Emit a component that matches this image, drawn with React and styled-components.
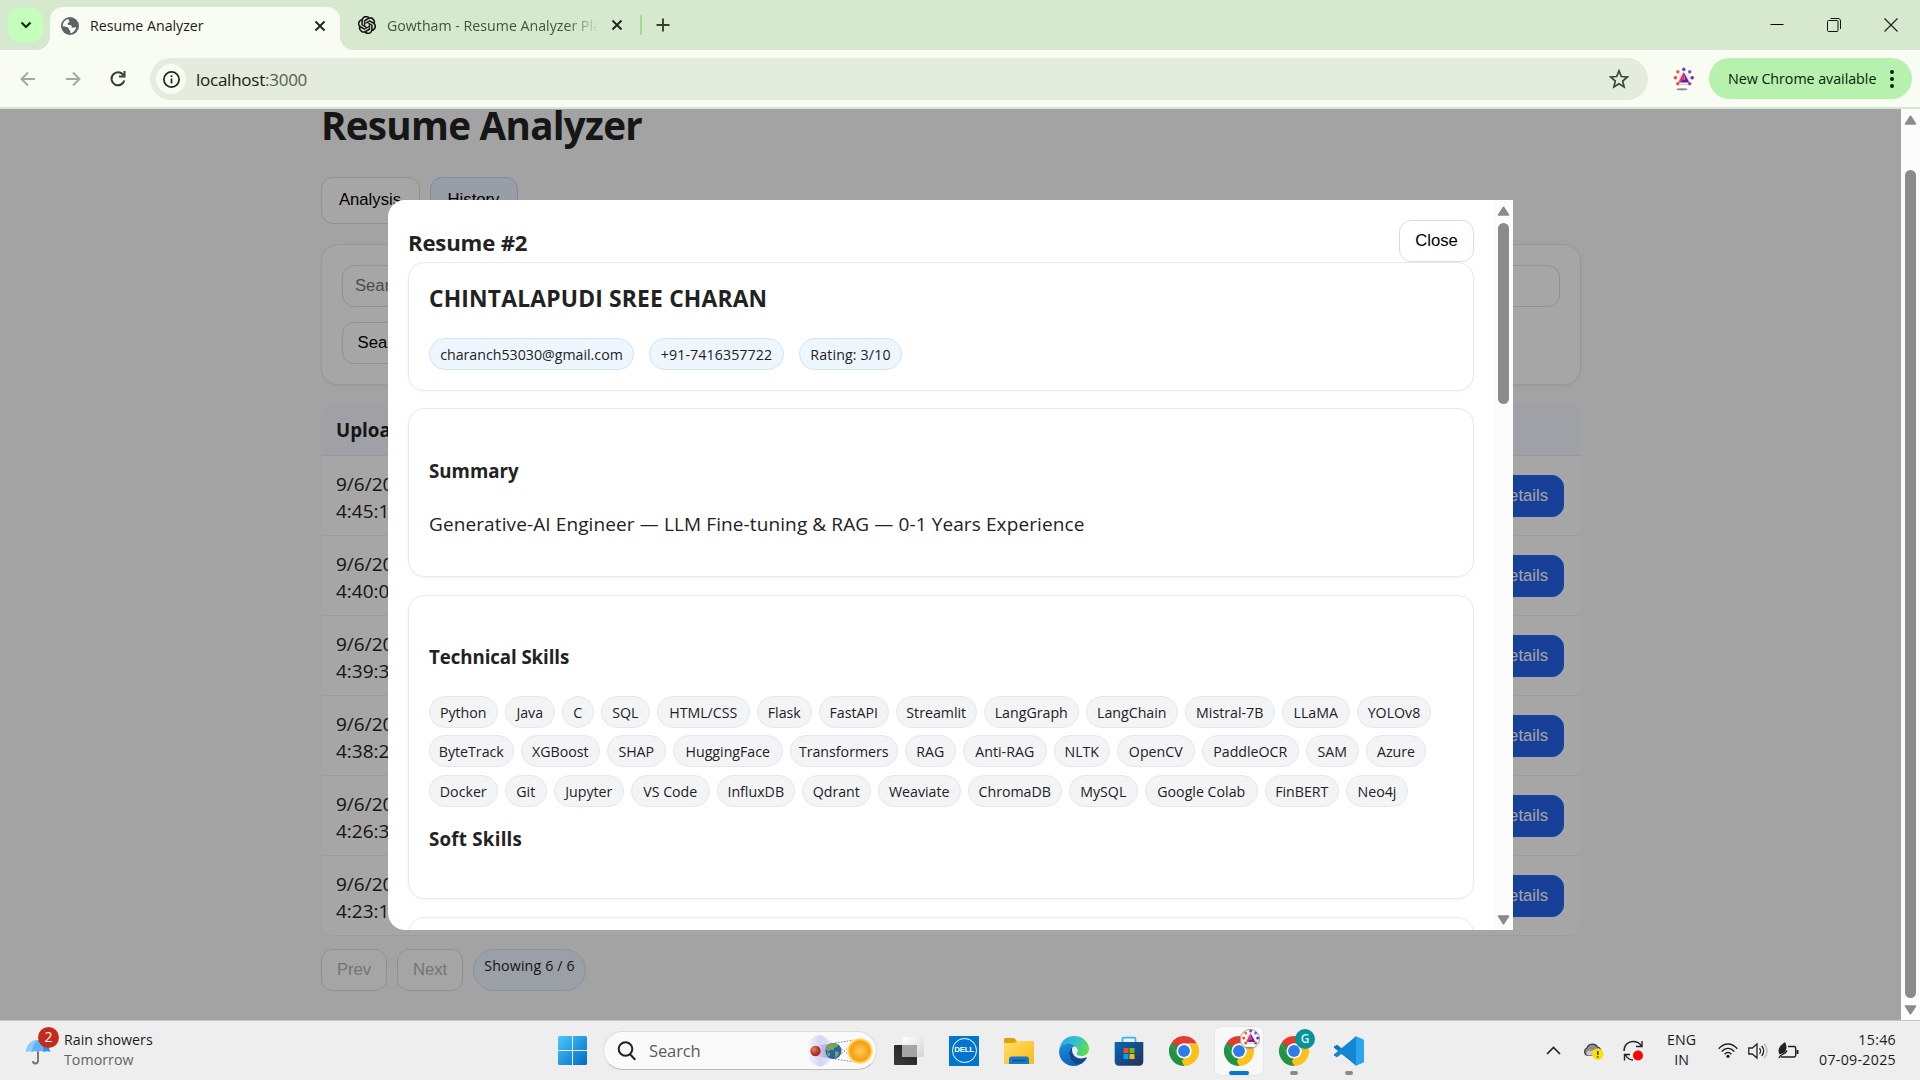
import React from "react";
import styled, { createGlobalStyle, css } from "styled-components";
import { SiOpenai } from "react-icons/si";

const UI = `"Open Sans", "Noto Sans", sans-serif`;
const ARIAL = `"Liberation Sans", Arial, sans-serif`;

const GlobalStyle = createGlobalStyle`
  *, *::before, *::after { box-sizing: border-box; }
  html, body { margin: 0; padding: 0; overflow: hidden; }
  body { font-family: ${UI}; color: #222; }
  h1, h2, h3, p { margin: 0; }
  button, input { font-family: ${ARIAL}; margin: 0; }
  svg { display: block; flex: none; }
`;

const Desktop = styled.div`
  width: 1920px;
  height: 1080px;
  display: flex;
  flex-direction: column;
  overflow: hidden;
  background: #fbfbfb;
`;

/* ---------- browser frame ---------- */

const TabStrip = styled.div`
  flex: none;
  height: 50px;
  display: flex;
  align-items: center;
  padding-left: 8px;
  background: #d6e8ce;
`;

const TabSearch = styled.button`
  width: 35px;
  height: 34px;
  margin-right: 7px;
  padding: 0;
  border: 0;
  border-radius: 12px;
  display: grid;
  place-items: center;
  background: #c4ffbc;
`;

const Tab = styled.div`
  display: flex;
  align-items: center;
  color: #43543f;
  width: 300px;
  height: 50px;
  padding: 0 17px 0 18px;
  ${(p) =>
    p.$active &&
    css`
      position: relative;
      width: 290px;
      height: 43px;
      align-self: flex-end;
      padding: 0 14px 6px 11px;
      border-radius: 13px 13px 0 0;
      background: #f8fcf3;
      color: #1c211a;
      &::before,
      &::after {
        content: "";
        position: absolute;
        bottom: 0;
        width: 13px;
        height: 13px;
      }
      &::before {
        left: -13px;
        background: radial-gradient(circle at 0 0, transparent 12.5px, #f8fcf3 13px);
      }
      &::after {
        right: -13px;
        background: radial-gradient(circle at 100% 0, transparent 12.5px, #f8fcf3 13px);
      }
    `}
`;

const TabTitle = styled.span`
  flex: 1;
  margin: 0 14px 0 11px;
  padding-top: 1px;
  font-size: 14.2px;
  line-height: 22px;
  white-space: nowrap;
  overflow: hidden;
  ${(p) =>
    p.$fade &&
    css`
      mask-image: linear-gradient(to right, #000 180px, transparent 212px);
    `}
`;

const TabDivider = styled.i`
  width: 2px;
  height: 20px;
  margin: 0 14px 0 0;
  background: #9fdc98;
`;

const WindowButtons = styled.div`
  margin-left: auto;
  display: flex;
  align-items: center;
  gap: 43px;
  padding: 0 22px 1px 0;
`;

const Toolbar = styled.div`
  flex: none;
  height: 59px;
  display: flex;
  align-items: center;
  padding: 1px 8px 0 18px;
  background: #f8fcf3;
  border-bottom: 2px solid #d9e6d3;
`;

const NavButtons = styled.div`
  display: flex;
  align-items: center;
  gap: 25px;
  width: 132px;
`;

const Omnibox = styled.div`
  width: 1498px;
  height: 42px;
  border-radius: 21px;
  display: flex;
  align-items: center;
  padding: 0 19px 0 6px;
  background: #e3ecdd;
`;

const SiteInfo = styled.span`
  width: 30px;
  height: 30px;
  border-radius: 50%;
  display: grid;
  place-items: center;
  background: #f8fcf3;
`;

const Address = styled.span`
  flex: 1;
  margin-left: 10px;
  padding-top: 2px;
  font-size: 17px;
  line-height: 26px;
  letter-spacing: -0.25px;
  color: #1b211a;
  span {
    color: #52604e;
  }
`;

const Avatar = styled.span`
  width: 24px;
  height: 24px;
  margin: 0 14px 0 23px;
`;

const UpdatePill = styled.button`
  width: 203px;
  height: 41px;
  margin-bottom: 1px;
  border: 0;
  border-radius: 21px;
  display: flex;
  align-items: center;
  justify-content: space-between;
  padding: 0 18px 0 19px;
  background: #b6f2ad;
  color: #07240a;
  font-family: ${UI};
  font-size: 14.3px;
  letter-spacing: -0.05px;
  white-space: nowrap;
`;

/* ---------- page ---------- */

const Viewport = styled.div`
  flex: none;
  height: 911px;
  display: flex;
`;

const Page = styled.main`
  position: relative;
  width: 1901px;
  height: 911px;
  overflow: hidden;
  padding: 1px 320px 0 321px;
  background: #fbfbfb;
`;

const Track = styled.div`
  width: 19px;
  flex: none;
  display: flex;
  flex-direction: column;
  align-items: center;
  justify-content: space-between;
  padding: 6px 0 5px;
  background: #fcfcfc;
`;

const Thumb = styled.i`
  width: 11px;
  height: ${(p) => p.$h}px;
  margin-top: ${(p) => p.$top}px;
  margin-bottom: auto;
  border-radius: 6px;
  background: #8b8b8b;
`;

const PageTitle = styled.h1`
  margin-bottom: 37px;
  font-size: 38.6px;
  font-weight: 700;
  line-height: 30px;
  letter-spacing: -0.7px;
  white-space: nowrap;
`;

const Row = styled.div`
  display: flex;
  gap: 10px;
`;

const buttonBase = css`
  height: 42px;
  padding: 0 15px;
  border: 1px solid #ddd;
  border-radius: 12px;
  background: #fff;
  color: #000;
  font-family: ${ARIAL};
  font-size: 16.67px;
  line-height: 20px;
  white-space: nowrap;
`;

const Button = styled.button`
  ${buttonBase}
  width: ${(p) => p.$w}px;
  padding: 0;
  ${(p) => p.disabled && "color: #b3b3b3; background: #fdfdfd;"}
`;

const NavTab = styled.button`
  ${buttonBase}
  width: ${(p) => p.$w}px;
  height: 47px;
  padding: 0 1px 2px 0;
  ${(p) => p.$active && "background: #eaf2ff; border-color: #bcd6fb;"}
`;

const PrimaryButton = styled.button`
  ${buttonBase}
  border-color: #2563eb;
  background: #2563eb;
  color: #fff;
`;

const Filters = styled.section`
  height: 141px;
  margin: 20px 0 18px;
  padding: 20px;
  display: flex;
  flex-direction: column;
  align-items: flex-start;
  gap: 15px;
  border: 1px solid #eaeaea;
  border-radius: 17px;
  background: #fff;
  box-shadow: 0 1px 3px rgba(0, 0, 0, 0.06);
`;

const SearchInput = styled.input`
  width: 100%;
  height: 42px;
  padding: 0 12px;
  border: 1px solid #ddd;
  border-radius: 12px;
  background: #fff;
  font-size: 16.67px;
  &::placeholder {
    color: #757575;
  }
`;

const Table = styled.section`
  height: 533px;
  margin-bottom: 13px;
  border-radius: 15px;
  overflow: hidden;
  background: #fff;
  box-shadow: 0 0 1px #eee;
`;

const HeadRow = styled.div`
  height: 53px;
  padding: 2px 16px 0 15px;
  border-bottom: 1px solid #e5e9f2;
  background: #f6f8ff;
  font-size: 18.8px;
  font-weight: 700;
  line-height: 51px;
`;

const HistoryRow = styled.div`
  height: 80px;
  display: flex;
  justify-content: space-between;
  align-items: center;
  padding: 0 17px 0 15px;
  border-bottom: 1px solid #f2f2f2;
`;

const Stamp = styled.div`
  padding-top: 4px;
  width: 110px;
  font-size: 19px;
  line-height: 27px;
`;

const Shade = styled.div`
  position: absolute;
  inset: 0;
  background: rgba(0, 0, 0, 0.35);
`;

const Chip = styled.span`
  flex: none;
  display: inline-block;
  text-align: center;
  width: ${(p) => p.$w}px;
  height: ${(p) => (p.$tall ? 42 : 32)}px;
  padding-top: 5px;
  border: 1px solid ${(p) => (p.$blue ? "#cfe3ff" : "#e5e7eb")};
  border-radius: 21px;
  background: ${(p) => (p.$blue ? "#eef6ff" : "#f3f4f6")};
  font-size: 14.2px;
  line-height: 21px;
  letter-spacing: ${(p) => p.$ls || 0}px;
  white-space: nowrap;
`;

/* ---------- dialog ---------- */

const Dialog = styled.div`
  position: absolute;
  left: 388px;
  top: 91px;
  width: 1125px;
  height: 730px;
  display: flex;
  border-radius: 17px 0 0 17px;
  overflow: hidden;
  background: #fff;
`;

const DialogBody = styled.div`
  flex: 1;
  height: 730px;
  overflow: hidden;
  padding: 20px;
`;

const DialogHead = styled.div`
  display: flex;
  justify-content: space-between;
  align-items: center;
  height: 42px;
`;

const DialogTitle = styled.h2`
  padding-top: 4px;
  font-size: 22.2px;
  font-weight: 700;
  line-height: 30px;
  letter-spacing: -0.2px;
`;

const PersonName = styled.h2`
  font-size: 22.8px;
  font-weight: 700;
  line-height: 30px;
  letter-spacing: 0.2px;
`;

const ContactRow = styled.div`
  display: flex;
  gap: 15px;
  padding-top: 24px;
`;

const Card = styled.section`
  height: ${(p) => p.$h}px;
  margin-bottom: ${(p) => p.$mb || 17}px;
  padding: ${(p) => p.$pt}px 20px 0;
  border: 1px solid #eaeaea;
  border-radius: 16px;
  background: #fff;
  box-shadow: 0 1px 3px rgba(0, 0, 0, 0.04);
`;

const SectionTitle = styled.h3`
  margin-bottom: ${(p) => p.$mb || 0}px;
  font-size: 18.7px;
  font-weight: 700;
  line-height: 28px;
  letter-spacing: ${(p) => p.$ls || 0}px;
`;

const Summary = styled.p`
  font-size: 19px;
  line-height: 28px;
  letter-spacing: 0.11px;
  white-space: nowrap;
`;

const SkillRow = styled.div`
  display: flex;
  gap: 7.5px;
  margin-bottom: ${(p) => p.$mb}px;
`;

/* ---------- taskbar ---------- */

const Taskbar = styled.footer`
  flex: none;
  height: 60px;
  display: flex;
  align-items: center;
  padding: 0 24px;
  border-top: 1px solid #c4c4c4;
  background: #eee;
`;

const Weather = styled.div`
  display: flex;
  align-items: center;
  width: 534px;
  gap: 5px;
`;

const TwoLines = styled.div`
  padding-bottom: 1px;
  font-size: 14.2px;
  line-height: 20px;
  letter-spacing: ${(p) => p.$ls || 0}px;
  text-align: ${(p) => p.$align || "left"};
  color: #1b1b1b;
  white-space: nowrap;
  ${(p) => p.$muted && "div + div { color: #626262; }"}
`;

const SearchBox = styled.div`
  width: 274px;
  height: 39px;
  margin: 0 8px 0 16px;
  padding: 0 1px 0 13px;
  display: flex;
  align-items: center;
  border: 1px solid #dcdcdc;
  border-bottom-color: #bdbdbd;
  border-radius: 20px;
  background: #fafafa;
  span {
    flex: 1;
    margin-left: 12px;
    font-size: 16.6px;
    letter-spacing: -0.15px;
    line-height: 24px;
    color: #5c5c5c;
  }
`;

const AppSlot = styled.div`
  position: relative;
  width: 48px;
  height: 48px;
  margin-right: 7px;
  display: grid;
  place-items: center;
  border-radius: 6px;
  ${(p) => p.$open && "background: #f8f8f8; box-shadow: 0 0 0 1px #e6e6e6;"}
  &::after {
    content: "";
    position: absolute;
    left: 50%;
    bottom: 0;
    width: ${(p) => p.$bar || 0}px;
    height: 4px;
    transform: translateX(-50%);
    border-radius: 2px;
    background: ${(p) => (p.$open ? "#0078d4" : "#8a8a8a")};
  }
`;

const Badge = styled.span`
  position: absolute;
  right: 3px;
  top: 2px;
  width: 20px;
  height: 20px;
  border-radius: 50%;
  display: grid;
  place-items: center;
  background: ${(p) => p.$bg};
  color: #d7f3f3;
  font-size: 12px;
  font-weight: 600;
`;

const AlertBadge = styled.span`
  position: absolute;
  left: 14px;
  top: -12px;
  width: 21px;
  height: 21px;
  border-radius: 50%;
  background: #c42b1c;
  color: #fff;
  font-size: 14px;
  line-height: 20px;
  text-align: center;
`;

const WeatherIcon = styled.div`
  position: relative;
  width: 35px;
  height: 26px;
  margin-top: 3px;
  padding-left: 1px;
`;

const Tray = styled.div`
  margin-left: auto;
  display: flex;
  align-items: center;
`;

const TrayItem = styled.div`
  margin-right: ${(p) => p.$mr}px;
`;

/* ---------- drawings ---------- */

const Stroke = ({ w, h = w, d, s = 2, c = "#1f261d" }) => (
  <svg width={w} height={h} viewBox={`0 0 ${w} ${h}`} fill="none" stroke={c} strokeWidth={s}>
    <path d={d} />
  </svg>
);

const CrossIcon = () => <Stroke w={12} d="M1.5 1.5 10.5 10.5M10.5 1.5 1.5 10.5" s={1.9} />;

const Globe = () => (
  <svg width="18" height="18" viewBox="0 0 18 18">
    <circle cx="9" cy="9" r="9" fill="#5f6368" />
    <path d="M8 1.8c-1 1-.5 1.7.3 2.2.6 1-.5 1.6-1.6 2.1-.2 1.7.4 2 2 2 2 0 2.5 1.2 1.8 2.5 1 .3 2.5 0 4.6-.7C14.5 14 11.5 16 9.5 16.2c-.6-1.2 0-2-.4-2.8-.9-.6-1.6-1-1.4-2.4C6.500 9.800 3.500 9.500 1.800 9.200 1.600 6 4 2.500 8 1.800z" fill="#f8fcf3" />
    <path d="M10.500 2c2.500.5 4.300 2 5 4.300-1.300.7-2 .2-2.400-.8-1.300.2-2.800-.6-2.600-3.500z" fill="#5f6368" />
  </svg>
);

const Arrow = ({ flip }) => (
  <svg width="20" height="20" viewBox="0 0 20 20" fill="none" stroke="#a2a9a0" strokeWidth="1.9">
    <path d={flip ? "M3 10h13M10 3.5 16.5 10 10 16.5" : "M17 10H4M10 3.5 3.5 10 10 16.5"} />
  </svg>
);

const Emblem = ({ size = 24, ring }) => {
  const dots = ["#6a4bc4", "#7a5ac0", "#5e35b1", "#b5476a", null, "#f4511e", "#f4511e", "#f4642e"];
  return (
    <svg width={size} height={size} viewBox="0 0 24 24">
      <circle cx="12" cy="12" r="12" fill="#fffdfa" />
      {ring && <circle cx="12" cy="12" r="11.5" fill="none" stroke="#8a8a8a" />}
      {dots.map((c, i) => {
        const a = (i * Math.PI) / 4;
        return c && <circle key={i} cx={12.8 + 8.4 * Math.sin(a)} cy={10.8 - 8.4 * Math.cos(a)} r="1.8" fill={c} />;
      })}
      <ellipse cx="11" cy="22.3" rx="5.5" ry="1.1" fill="#8c8c8c" />
      <circle cx="12.8" cy="11" r="5.6" fill="#f3e6ee" />
      <path d="M12.6 5 7.4 15.5h4.2l1.6-5z" fill="#e5305a" />
      <path d="M12.6 5 18.4 15.5h-8.200l1.600-3h2z" fill="#5b1fa6" />
      <path d="M9 17.500h8" stroke="#dbc7c7" />
    </svg>
  );
};

const Triangle = ({ down }) => (
  <svg width="13" height="10" viewBox="0 0 13 10">
    <path d={down ? "M1.5 1h10L6.5 8.7z" : "M1.5 9h10L6.5 1.3z"} fill="#8b8b8b" stroke="#8b8b8b" strokeWidth="1.6" strokeLinejoin="round" />
  </svg>
);

const Umbrella = () => (
  <svg width="26" height="26" viewBox="0 0 26 26">
    <path d="M13 11v11a2.500 2.500 0 0 1-5 0" fill="none" stroke="#77706e" strokeWidth="1.9" />
    <path d="M1 13C2 5 7 1 13 1s11 4 12 12c-2-1.500-4-1.500-6 0-2-1.500-4-1.500-6 0-2-1.500-4-1.500-6 0-2-1.500-4-1.500-6 0z" fill="#5eb3f7" />
    <path d="M7 13C7.500 7 9.500 3 13 1c-6 0-11 4-12 12 2-1.500 4-1.500 6 0z" fill="#8bcbfb" />
    <path d="M19 13C18.500 7 16.500 3 13 1c6 0 11 4 12 12-2-1.500-4-1.500-6 0z" fill="#2f8ee8" />
  </svg>
);

const WindowsLogo = () => (
  <svg width="29" height="29" viewBox="0 0 29 29">
    <defs>
      <linearGradient id="win" x1="0" y1="0" x2="1" y2="1">
        <stop offset="0" stopColor="#4cc9fb" />
        <stop offset="1" stopColor="#0068c8" />
      </linearGradient>
    </defs>
    <path d="M1 0h13v14H0V1zM15 0h13l1 1v13H15zM0 15h14v14H1l-1-1zM15 15h14v13l-1 1H15z" fill="url(#win)" />
  </svg>
);

const EclipseArt = () => (
  <svg width="68" height="34" viewBox="0 0 68 34">
    <defs>
      <linearGradient id="cone" x1="0" y1="0" x2="1" y2="0">
        <stop offset="0" stopColor="#f4f4fc" />
        <stop offset=".5" stopColor="#d5d4f4" />
        <stop offset="1" stopColor="#e9e9fa" />
      </linearGradient>
      <linearGradient id="umbra" x1="0" y1="0" x2="1" y2="0">
        <stop offset="0" stopColor="#dcdcf4" />
        <stop offset="1" stopColor="#8f8fc8" />
      </linearGradient>
      <radialGradient id="sun">
        <stop offset="0" stopColor="#fed04a" />
        <stop offset=".74" stopColor="#fa9a20" />
        <stop offset=".82" stopColor="#fcc01c" />
        <stop offset="1" stopColor="#fff0ac" />
      </radialGradient>
      <radialGradient id="moon" cx=".35" cy=".35">
        <stop offset="0" stopColor="#f08058" />
        <stop offset="1" stopColor="#a92f22" />
      </radialGradient>
    </defs>
    <path d="M1 9C4 4 9 1 14 1c4 2 8 5 12 9v13c-4 5-8 8-12 10C9 32 4 30 1 24z" fill="url(#cone)" />
    <path d="M8 12 27 9v16L8 22z" fill="url(#umbra)" />
    <path d="M28 9 54 5M28 25 54 29M30 11 42 21M30 23 42 13" stroke="#777fa0" strokeWidth="1" strokeDasharray="1.5 1.5" fill="none" />
    <circle cx="8.500" cy="17" r="5.200" fill="url(#moon)" />
    <circle cx="26.500" cy="17" r="8" fill="#2860ad" />
    <path d="M23 9.800c3-1 6-.8 8 .7l-1 3-3 0 0 3-3-1-3 2-2-2c0-2 2-4.500 4-5.700zM28 17l4 1-1 4-3 2zM20 18l3 1 0 3-2 0z" fill="#76a850" />
    <circle cx="53" cy="17" r="13" fill="url(#sun)" />
  </svg>
);

const TaskView = () => (
  <svg width="30" height="30" viewBox="0 0 30 30">
    <defs>
      <linearGradient id="tv" x1="0" y1="0" x2="1" y2="1">
        <stop offset="0" stopColor="#ffffff" />
        <stop offset="1" stopColor="#d4d4d4" />
      </linearGradient>
      <linearGradient id="tvDark" x1="0" y1="1" x2="1" y2="0">
        <stop offset="0" stopColor="#3a3a38" />
        <stop offset="1" stopColor="#1e1e1d" />
      </linearGradient>
    </defs>
    <rect x="0" y="9" width="23" height="20" rx="1" fill="url(#tvDark)" />
    <rect x="8" y="1" width="22" height="20" rx="1" fill="url(#tv)" />
    <rect x="8" y="9" width="15" height="12" fill="#a4a4a2" />
  </svg>
);

const DellSquare = styled.span`
  width: 30px;
  height: 30px;
  display: grid;
  place-items: center;
  background: #0076ce;
  span {
    width: 25px;
    height: 25px;
    border: 1.5px solid #fff;
    border-radius: 50%;
    color: #fff;
    font: 700 8px/22px ${ARIAL};
    letter-spacing: -0.4px;
    text-align: center;
  }
`;

const Folder = () => (
  <svg width="30" height="30" viewBox="0 0 30 30">
    <defs>
      <linearGradient id="fold" x1="0" y1="0" x2="1" y2="1">
        <stop offset="0" stopColor="#ffdf6b" />
        <stop offset="1" stopColor="#fbb914" />
      </linearGradient>
    </defs>
    <path d="M0 3.500C0 2.500.5 2 1.500 2H10l3 3h15l2 2v5H0z" fill="#dfa00c" />
    <path d="M0 7h10.500l2.500-2h16c.6 0 1 .4 1 1v21c0 .6-.4 1-1 1H1c-.6 0-1-.4-1-1z" fill="url(#fold)" />
    <path d="M5 28v-5c0-1.500 1-2.500 2.500-2.500h15c1.500 0 2.500 1 2.500 2.500v5z" fill="#1779cc" />
    <path d="M9 24.500h12" stroke="#0a4f93" strokeWidth="1.5" strokeLinecap="round" />
  </svg>
);

const Edge = () => (
  <svg width="30" height="30" viewBox="0 0 30 30">
    <defs>
      <linearGradient id="eg" x1="0" y1=".3" x2="1" y2=".6">
        <stop offset="0" stopColor="#2aa9e0" />
        <stop offset=".5" stopColor="#2fc2cf" />
        <stop offset="1" stopColor="#63e03e" />
      </linearGradient>
      <linearGradient id="eb" x1="0" y1="0" x2=".4" y2="1">
        <stop offset="0" stopColor="#1b90dc" />
        <stop offset="1" stopColor="#0b63bb" />
      </linearGradient>
    </defs>
    <path d="M0.300 14C1 6 7 0 15 0c9 0 15 6.500 15 12.500 0 5-3.500 7.500-7.500 7.500-3.500 0-5-1.200-5-2.200 0-.8 1.200-1.200 1.200-3.300C18.700 11.500 14.500 8 9.500 8 5 8 1.500 10.500.3 14z" fill="url(#eg)" />
    <path d="M.2 14C1.500 10 5 7.800 9.500 7.800c3 0 5.500 1.200 7 2.700-3.500-.3-6.500 2.500-6.500 6.500 0 6 5 12 11 11.500-2 1-4 1.500-6 1.500C6.500 30-.8 23 .2 14z" fill="url(#eb)" />
    <path d="M10 17c0-3 1.500-5 3.500-6-1.500 4 .5 11.500 9 11.500 2 0 3.500-.6 4.500-1.200.6-.3 1 .1.700.7C26 25.500 22.500 28.500 19.500 28.700 14 28.500 10 23 10 17z" fill="#0d4a93" />
  </svg>
);

const Store = () => (
  <svg width="30" height="30" viewBox="0 0 30 30">
    <defs>
      <linearGradient id="st" x1="0" y1="0" x2="1" y2="1">
        <stop offset="0" stopColor="#0569bd" />
        <stop offset="1" stopColor="#243057" />
      </linearGradient>
    </defs>
    <path d="M8.500 7V3c0-.8.500-1.300 1.300-1.300h10.400c.8 0 1.300.5 1.300 1.300v4" fill="none" stroke="#31bdf2" strokeWidth="1.8" />
    <path d="M.7 6h28.600v19.500c0 2.500-1.500 4.300-4 4.300H4.700c-2.500 0-4-1.800-4-4.300z" fill="url(#st)" />
    <path d="M9.500 12h5v5h-5z" fill="#f25022" />
    <path d="M15.500 12h5v5h-5z" fill="#7fba00" />
    <path d="M9.500 18h5v5h-5z" fill="#00a4ef" />
    <path d="M15.500 18h5v5h-5z" fill="#ffb900" />
  </svg>
);

const Chrome = () => (
  <svg width="30" height="30" viewBox="0 0 48 48">
    <path d="M24 0a24 24 0 0 1 20.800 12H24a12 12 0 0 0-10.400 6L3.200 12A24 24 0 0 1 24 0z" fill="#e33b2e" />
    <path d="M44.800 12A24 24 0 0 1 24 48l10.400-18A12 12 0 0 0 34.400 18L33 12z" fill="#fbc116" />
    <path d="M3.200 12 13.600 30A12 12 0 0 0 24 36l5.500-1L24 48A24 24 0 0 1 3.200 12z" fill="#229342" />
    <path d="M34.400 30 24 48l-4-8 4-4z" fill="#fbc116" />
    <path d="M13.600 30 3.200 12l7 1 4 5z" fill="#229342" />
    <path d="M24 36 20 40 24 48 22 48 14 36z" fill="#229342" />
    <circle cx="24" cy="24" r="12" fill="#fff" />
    <circle cx="24" cy="24" r="9.500" fill="#2f7bea" />
  </svg>
);

const VsCode = () => (
  <svg width="30" height="30" viewBox="0 0 30 30">
    <path d="M22 0.300 8.500 13 3.200 8.800 0 10.300v1.500L22.300 29.700 22.500 21z" fill="#0b76c1" />
    <path d="M22 29.700 8.500 17 3.200 21.200 0 19.700v-1.500L22.300.3l.2 8.700z" fill="#1387d2" />
    <path d="M22 0.200 29 3.300c.6.300 1 .8 1 1.500v20.400c0 .7-.4 1.200-1 1.500l-7 3.100z" fill="#2aa5f0" />
  </svg>
);

const Wifi = () => (
  <svg width="20" height="16" viewBox="0 0 20 16" fill="none" stroke="#222" strokeWidth="1.4">
    <path d="M.7 5.800C6-.7 14-.7 19.300 5.800M3.700 8.600c3.700-4.300 8.900-4.300 12.600 0M6.600 11.200c2-2.300 4.800-2.300 6.800 0" />
    <circle cx="10" cy="13.300" r="1.600" fill="#222" stroke="none" />
  </svg>
);

const Speaker = () => (
  <svg width="20" height="18" viewBox="0 0 20 18" fill="none" stroke="#222" strokeWidth="1.3">
    <path d="M.8 6v6h3.500L9 16V2L4.300 6zM11.500 6.200c1.300 1.500 1.300 4.100 0 5.600M13.700 4c2.600 2.800 2.600 7.200 0 10" />
    <path d="M16 1.800c4 4 4 10.400 0 14.400" stroke="#bbb" />
  </svg>
);

const Battery = () => (
  <svg width="21" height="18" viewBox="0 0 21 18">
    <path d="M10 4.500h6c1 0 1.700.7 1.700 1.700v7.100c0 1-.7 1.700-1.700 1.700H3" fill="none" stroke="#222" strokeWidth="1.4" />
    <path d="M18.500 8h2v4h-2z" fill="#222" />
    <path d="M7 0C8.500 3 9.500 7 6.500 10.500L1.500 12.500C-.8 8 1 4 7 0z" fill="#222" />
    <path d="M1 16C3 10.500 7.500 13 9 8.500" fill="none" stroke="#222" strokeWidth="1.4" />
  </svg>
);

const Cloud = () => (
  <svg width="21" height="18" viewBox="0 0 21 18">
    <path d="M4.500 13.500A4 4 0 0 1 4 6C5.500 1.500 12 .5 14.500 5c3.500.5 4 5 2 8.500z" fill="#8e8e8e" stroke="#3d3d3d" strokeWidth="1.2" />
    <path d="M4.500 13.500C2 11 5 7.500 8 9l8-2.500v7z" fill="#c9c9c9" />
    <circle cx="14.800" cy="12.300" r="5.700" fill="#fde100" />
    <path d="M14.800 9v4M14.800 14.200v1.500" stroke="#333" strokeWidth="1.5" />
  </svg>
);

const Sync = () => (
  <svg width="21" height="21" viewBox="0 0 21 21" fill="none" stroke="#222" strokeWidth="1.4">
    <path d="M1 11C1 5 5 1.500 10 1.500c4 0 7 2 8.500 4.500M19 1v5.500h-6M10 20c-3 0-5.500-1.500-7.500-5M1.500 20.500v-6h5.500" />
    <circle cx="15" cy="15.500" r="5" fill="#f00" stroke="none" />
  </svg>
);

/* ---------- data ---------- */

const skills = [
  [["Python", 68.5], ["Java", 49.5], ["C", 31.5], ["SQL", 48.5], ["HTML/CSS", 92.5], ["Flask", 54.5], ["FastAPI", 69.5], ["Streamlit", 80.5], ["LangGraph", 94.5], ["LangChain", 91.5], ["Mistral-7B", 89.5], ["LLaMA", 67.5], ["YOLOv8", 74]],
  [["ByteTrack", 84.5], ["XGBoost", 78.5], ["SHAP", 58.5], ["HuggingFace", 109.5], ["Transformers", 107.5], ["RAG", 50.5], ["Anti-RAG", 83.5], ["NLTK", 55.5], ["OpenCV", 77.5], ["PaddleOCR", 96.5], ["SAM", 52.5], ["Azure", 60]],
  [["Docker", 68.5], ["Git", 41.5], ["Jupyter", 69.5], ["VS Code", 78.5], ["InfluxDB", 77.5], ["Qdrant", 68.5], ["Weaviate", 82.5], ["ChromaDB", 93.5], ["MySQL", 68.5], ["Google Colab", 112.5], ["FinBERT", 73.5], ["Neo4j", 62]],
];

const times = ["4:45:1", "4:40:0", "4:39:3", "4:38:2", "4:26:3", "4:23:1"];

/* ---------- app ---------- */

function BrowserFrame() {
  return (
    <>
      <TabStrip>
        <TabSearch><Stroke w={12} h={8} d="M1.5 1.5 6 6 10.5 1.5" s={2.2} c="#0b2a0c" /></TabSearch>
        <Tab $active>
          <Globe />
          <TabTitle>Resume Analyzer</TabTitle>
          <CrossIcon />
        </Tab>
        <Tab>
          <SiOpenai size={18} color="#000" stroke="#000" strokeWidth={0.4} />
          <TabTitle $fade>Gowtham - Resume Analyzer Plan</TabTitle>
          <CrossIcon />
        </Tab>
        <TabDivider />
        <Stroke w={14} d="M7 0.5V13.5M.5 7H13.5" s={1.9} c="#33402f" />
        <WindowButtons>
          <Stroke w={14} d="M.5 6.5H13.5" s={1} c="#000" />
          <svg width="14" height="14" viewBox="0 0 14 14" fill="none" stroke="#111">
            <rect x=".5" y="2.5" width="10.5" height="11" rx="1" />
            <path d="M3.5.5h7.500c1.500 0 2.500 1 2.500 2.500v8" />
          </svg>
          <Stroke w={14} d="M.5.5 13.5 13.5M13.5.5.5 13.5" s={1.2} c="#222" />
        </WindowButtons>
      </TabStrip>
      <Toolbar>
        <NavButtons>
          <Arrow />
          <Arrow flip />
          <svg width="20" height="20" viewBox="0 0 20 20" fill="none" stroke="#33402f" strokeWidth="2">
            <path d="M16.300 11.500A6.500 6.500 0 1 1 15.300 6M16.500 2v5.500H11" />
          </svg>
        </NavButtons>
        <Omnibox>
          <SiteInfo>
            <svg width="17" height="17" viewBox="0 0 17 17" fill="none" stroke="#1f261d" strokeWidth="1.7">
              <circle cx="8.5" cy="8.5" r="7.6" />
              <path d="M8.5 7.5v5M8.5 4.3v1.8" />
            </svg>
          </SiteInfo>
          <Address>localhost<span>:3000</span></Address>
          <Stroke w={20} d="M10 1.8 12.3 7.5 18.3 8 13.7 12 15.1 17.9 10 14.7 4.9 17.9 6.3 12 1.7 8 7.7 7.5z" s={1.7} c="#3b4837" />
        </Omnibox>
        <Avatar><Emblem /></Avatar>
        <UpdatePill>
          New Chrome available
          <svg width="4" height="18" viewBox="0 0 4 18" fill="#07240a">
            <circle cx="2" cy="2" r="2" /><circle cx="2" cy="9" r="2" /><circle cx="2" cy="16" r="2" />
          </svg>
        </UpdatePill>
      </Toolbar>
    </>
  );
}

function ResumeDialog() {
  return (
    <Dialog>
      <DialogBody>
        <DialogHead>
          <DialogTitle>Resume #2</DialogTitle>
          <Button $w={75}>Close</Button>
        </DialogHead>
        <Card $h={129} $pt={21}>
          <PersonName>CHINTALAPUDI SREE CHARAN</PersonName>
          <ContactRow>
            <Chip $blue $w={205}>charanch53030@gmail.com</Chip>
            <Chip $blue $w={135} $ls={0.1}>+91-7416357722</Chip>
            <Chip $blue $w={103} $ls={0.15}>Rating: 3/10</Chip>
          </ContactRow>
        </Card>
        <Card $h={169} $mb={18} $pt={48}>
          <SectionTitle $mb={25}>Summary</SectionTitle>
          <Summary>Generative-AI Engineer — LLM Fine-tuning &amp; RAG — 0-1 Years Experience</Summary>
        </Card>
        <Card $h={304} $pt={47} $mb={18}>
          <SectionTitle $mb={25} $ls={-0.08}>Technical Skills</SectionTitle>
          {skills.map((row, i) => (
            <SkillRow key={i} $mb={[7, 8, 18][i]}>
              {row.map(([name, w]) => <Chip key={name} $w={w}>{name}</Chip>)}
            </SkillRow>
          ))}
          <SectionTitle $ls={0.25}>Soft Skills</SectionTitle>
        </Card>
        <Card $h={200} $pt={47} />
      </DialogBody>
      <Track>
        <Triangle />
        <Thumb $h={181} $top={7} />
        <Triangle down />
      </Track>
    </Dialog>
  );
}

function WindowsTaskbar() {
  return (
    <Taskbar>
      <Weather>
        <WeatherIcon><Umbrella /><AlertBadge>2</AlertBadge></WeatherIcon>
        <TwoLines $muted $ls={0.05}><div>Rain showers</div><div>Tomorrow</div></TwoLines>
      </Weather>
      <WindowsLogo />
      <SearchBox>
        <svg width="20" height="20" viewBox="0 0 20 20" fill="none" stroke="#222" strokeWidth="2">
          <circle cx="8.5" cy="8" r="6.8" /><path d="M13 13.2 18.3 18.7" />
        </svg>
        <span>Search</span>
        <EclipseArt />
      </SearchBox>
      <AppSlot><TaskView /></AppSlot>
      <AppSlot><DellSquare><span>DELL</span></DellSquare></AppSlot>
      <AppSlot><Folder /></AppSlot>
      <AppSlot><Edge /></AppSlot>
      <AppSlot><Store /></AppSlot>
      <AppSlot><Chrome /></AppSlot>
      <AppSlot $open $bar={20}><Chrome /><Badge $bg="#fff"><Emblem size={20} ring /></Badge></AppSlot>
      <AppSlot $bar={8}><Chrome /><Badge $bg="#0a929c">G</Badge></AppSlot>
      <AppSlot $bar={8}><VsCode /></AppSlot>
      <Tray>
        <TrayItem $mr={22}><Stroke w={15} h={9} d="M1 8 7.5 1.5 14 8" s={1.6} c="#222" /></TrayItem>
        <TrayItem $mr={19}><Cloud /></TrayItem>
        <TrayItem $mr={23}><Sync /></TrayItem>
        <TrayItem $mr={22}><TwoLines $align="center"><div>ENG</div><div>IN</div></TwoLines></TrayItem>
        <TrayItem $mr={10}><Wifi /></TrayItem>
        <TrayItem $mr={10}><Speaker /></TrayItem>
        <TrayItem $mr={20}><Battery /></TrayItem>
        <TwoLines $align="right" $ls={0.3}><div>15:46</div><div>07-09-2025</div></TwoLines>
      </Tray>
    </Taskbar>
  );
}

export default function App() {
  return (
    <Desktop>
      <GlobalStyle />
      <BrowserFrame />
      <Viewport>
        <Page>
          <PageTitle>Resume Analyzer</PageTitle>
          <Row>
            <NavTab $w={99}>Analysis</NavTab>
            <NavTab $w={88} $active>History</NavTab>
          </Row>
          <Filters>
            <SearchInput placeholder="Search" />
            <Button $w={84}>Search</Button>
          </Filters>
          <Table>
            <HeadRow>Uploaded</HeadRow>
            {times.map((t) => (
              <HistoryRow key={t}>
                <Stamp>9/6/2025, {t}</Stamp>
                <PrimaryButton>View Details</PrimaryButton>
              </HistoryRow>
            ))}
          </Table>
          <Row>
            <Button $w={66} disabled>Prev</Button>
            <Button $w={66} disabled>Next</Button>
            <Chip $blue $tall $w={113} $ls={0.15}>Showing 6 / 6</Chip>
          </Row>
          <Shade />
          <ResumeDialog />
        </Page>
        <Track>
          <Triangle />
          <Thumb $h={828} $top={45} />
          <Triangle down />
        </Track>
      </Viewport>
      <WindowsTaskbar />
    </Desktop>
  );
}
